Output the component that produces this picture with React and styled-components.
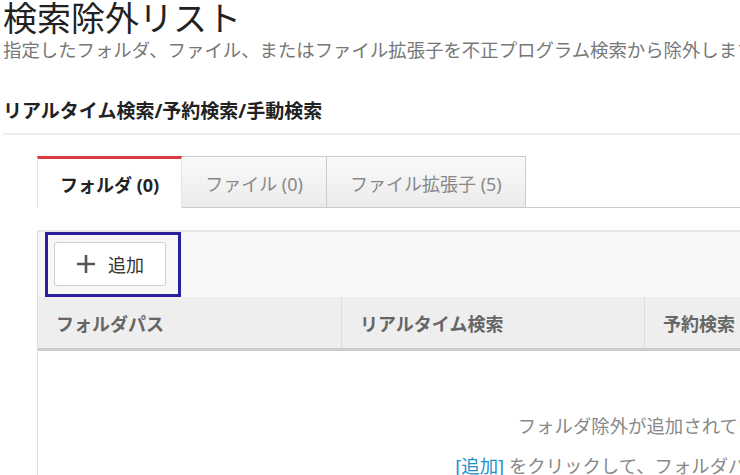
import React from "react";
import styled, { createGlobalStyle } from "styled-components";

const Global = createGlobalStyle`
  html, body { margin: 0; padding: 0; overflow: hidden; background: #fff; }
  body { font-family: "Noto Sans", "Noto Sans CJK JP", sans-serif; color: #333; }
  * { box-sizing: border-box; }
`;

const Page = styled.div`
  width: 1360px;
  padding: 0 0 0 3px;
`;

const Title = styled.h1`
  margin: 0;
  font-size: 34px;
  font-weight: 400;
  line-height: 36px;
  color: #222;
`;

const Subtitle = styled.p`
  margin: 2px 0 0;
  font-size: 18.4px;
  line-height: 24px;
  color: #777;
  white-space: nowrap;
`;

const SectionHeading = styled.h2`
  margin: 36px 0 0;
  font-size: 19px;
  font-weight: 700;
  line-height: 26px;
  color: #222;
  padding-bottom: 9px;
  border-bottom: 2px solid #eeeeee;
`;

const Content = styled.div`
  margin: 21px 0 0 34px;
  width: 1272px;
`;

const TabBar = styled.div`
  display: flex;
  border-bottom: 1px solid #cccccc;
  height: 52px;
`;

const Tab = styled.div`
  height: ${(p) => (p.$active ? "52px" : "51px")};
  padding: 0 ${(p) => (p.$active ? "22px" : "23px")};
  display: flex;
  align-items: center;
  font-size: 18px;
  white-space: nowrap;
  font-weight: ${(p) => (p.$active ? 700 : 400)};
  color: ${(p) => (p.$active ? "#222" : "#888")};
  background: ${(p) =>
    p.$active ? "#fff" : "linear-gradient(#fafafa, #ebebeb)"};
  border: 1px solid ${(p) => (p.$active ? "#e4e4e4" : "#cccccc")};
  border-top: ${(p) => (p.$active ? "3px solid #dc3a41" : "1px solid #cccccc")};
  border-bottom: none;
  border-left-width: ${(p) => (p.$first ? "1px" : "0")};
  padding-top: ${(p) => (p.$active ? "0" : "2px")};
`;

const Panel = styled.div`
  margin-top: 22px;
  border-top: 2px solid #e6e6e6;
  border-left: 1px solid #dddddd;
  position: relative;
`;

const Toolbar = styled.div`
  background: #f7f7f7;
  height: 65px;
  padding: 10px 0 0 16px;
`;

const AddButton = styled.button`
  display: flex;
  align-items: center;
  gap: 12px;
  height: 44px;
  width: 112px;
  padding: 0 0 0 21px;
  background: #fff;
  border: 1px solid #cfcfcf;
  border-radius: 3px;
  font-family: inherit;
  font-size: 18px;
  color: #333;
`;

const Highlight = styled.div`
  position: absolute;
  left: 7px;
  top: 0;
  width: 136px;
  height: 65px;
  border: 3px solid #2a1f9c;
  pointer-events: none;
`;

const HeaderRow = styled.div`
  display: grid;
  grid-template-columns: 303px 303px 303px 1fr;
  background: #eeeeee;
  height: 54px;
  border-bottom: 3px solid #cccccc;
`;

const HeaderCell = styled.div`
  display: flex;
  align-items: center;
  padding-left: 18px;
  font-size: 18px;
  font-weight: 700;
  color: #666;
  border-left: ${(p) => (p.$first ? "none" : "1px solid #dcdcdc")};
  white-space: nowrap;
`;

const Empty = styled.div`
  padding-top: 55px;
  text-align: center;
  font-size: 18.4px;
  color: #888;
  line-height: 40px;
`;

const EmptyLine = styled.div`
  white-space: nowrap;
`;

const Link = styled.span`
  color: #1f8fcf;
`;

const PlusIcon = () => (
  <svg width="20" height="20" viewBox="0 0 20 20">
    <path d="M10 1v18M1 10h18" stroke="#555" strokeWidth="2.6" fill="none" />
  </svg>
);

export default function App() {
  return (
    <Page>
      <Global />
      <Title>検索除外リスト</Title>
      <Subtitle>
        指定したフォルダ、ファイル、またはファイル拡張子を不正プログラム検索から除外します。
      </Subtitle>
      <SectionHeading>リアルタイム検索/予約検索/手動検索</SectionHeading>
      <Content>
        <TabBar>
          <Tab $active $first>フォルダ (0)</Tab>
          <Tab>ファイル (0)</Tab>
          <Tab>ファイル拡張子 (5)</Tab>
        </TabBar>
        <Panel>
          <Toolbar>
            <AddButton>
              <PlusIcon />
              追加
            </AddButton>
          </Toolbar>
          <Highlight />
          <HeaderRow>
            <HeaderCell $first>フォルダパス</HeaderCell>
            <HeaderCell>リアルタイム検索</HeaderCell>
            <HeaderCell>予約検索</HeaderCell>
            <HeaderCell>手動検索</HeaderCell>
          </HeaderRow>
          <Empty>
            <EmptyLine>フォルダ除外が追加されていません。</EmptyLine>
            <EmptyLine>
              <Link>[追加]</Link> をクリックして、フォルダパスを指定します。
            </EmptyLine>
          </Empty>
        </Panel>
      </Content>
    </Page>
  );
}
